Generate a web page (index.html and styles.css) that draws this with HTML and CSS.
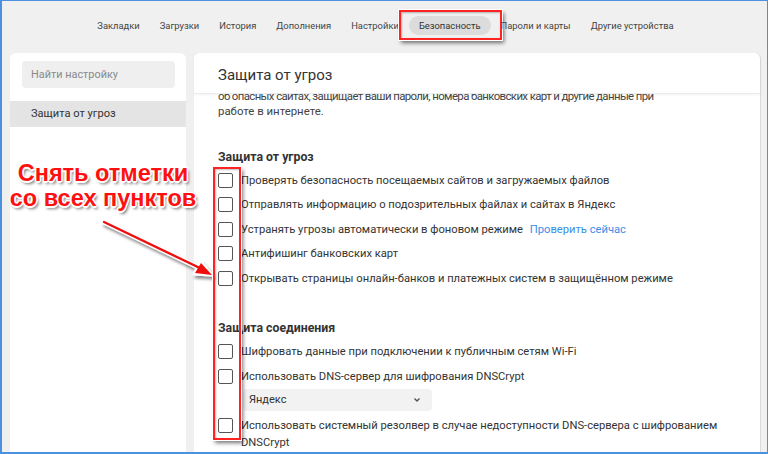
FILE: index.html
```html
<!DOCTYPE html>
<html lang="ru">
<head>
<meta charset="utf-8">
<link rel="stylesheet" href="styles.css">
</head>
<body>
<div class="frame">
  <nav class="topnav">
    <span class="tab">Закладки</span>
    <span class="tab">Загрузки</span>
    <span class="tab">История</span>
    <span class="tab">Дополнения</span>
    <span class="tab">Настройки</span>
    <span class="tab active">Безопасность<span class="mark-box"></span></span>
    <span class="tab">Пароли и карты</span>
    <span class="tab">Другие устройства</span>
  </nav>
  <div class="workspace">
    <aside class="sidebar">
      <div class="search">Найти настройку</div>
      <div class="side-item selected">Защита от угроз</div>
    </aside>
    <main class="panel">
      <header class="panel-head">Защита от угроз</header>
      <div class="panel-body">
        <div class="scroll">
          <p class="intro"><span class="clipped">об опасных сайтах, защищает ваши пароли, номера банковских карт и другие данные при</span><br>работе в интернете.</p>
          <h3 class="group-title first">Защита от угроз</h3>
          <div class="row"><span class="cb"></span><span>Проверять безопасность посещаемых сайтов и загружаемых файлов</span></div>
          <div class="row"><span class="cb"></span><span>Отправлять информацию о подозрительных файлах и сайтах в Яндекс</span></div>
          <div class="row"><span class="cb"></span><span>Устранять угрозы автоматически в фоновом режиме <a class="link">Проверить сейчас</a></span></div>
          <div class="row"><span class="cb"></span><span>Антифишинг банковских карт</span></div>
          <div class="row"><span class="cb"></span><span>Открывать страницы онлайн-банков и платежных систем в защищённом режиме</span></div>
          <h3 class="group-title second">Защита соединения</h3>
          <div class="row"><span class="cb"></span><span>Шифровать данные при подключении к публичным сетям Wi-Fi</span></div>
          <div class="row"><span class="cb"></span><span>Использовать DNS-сервер для шифрования DNSCrypt</span></div>
          <div class="select"><span>Яндекс</span><svg class="chev" width="8" height="6" viewBox="0 0 8 6"><path d="M1.5 1.5 L4 4 L6.5 1.5" fill="none" stroke="#555" stroke-width="1.4"/></svg></div>
          <div class="row wrap"><span class="cb"></span><span class="wrap-text">Использовать системный резолвер в случае недоступности DNS-сервера с шифрованием DNSCrypt</span></div>
        </div>
      </div>
    </main>
  </div>

  <div class="callout">Снять отметки<br>со всех пунктов</div>
  <svg class="arrow" width="130" height="70" viewBox="0 0 130 70">
    <defs>
      <filter id="sh" x="-20%" y="-20%" width="140%" height="160%">
        <feDropShadow dx="2" dy="3" stdDeviation="1.5" flood-color="#000" flood-opacity="0.45"/>
      </filter>
    </defs>
    <g filter="url(#sh)">
      <path d="M4 4 L104 52" stroke="#fff" stroke-width="5" stroke-linecap="round"/>
      <path d="M112 57 L94 56 L101 44 Z" fill="#fff" stroke="#fff" stroke-width="3" stroke-linejoin="round"/>
      <path d="M4 4 L104 52" stroke="#f01010" stroke-width="2.4" stroke-linecap="round"/>
      <path d="M112 57 L95 55 L101 45 Z" fill="#f01010"/>
    </g>
  </svg>
  <div class="cb-mark"></div>
</div>
</body>
</html>
```

FILE: styles.css
```css
* { box-sizing: border-box; }
html, body { margin: 0; padding: 0; }
body {
  width: 768px;
  height: 454px;
  overflow: hidden;
  font-family: Roboto, "Noto Sans", sans-serif;
  color: #333;
}
.frame {
  position: relative;
  width: 768px;
  height: 454px;
  background: #f0f0f0;
  border: 1px solid #4a92e0;
  border-width: 1px 1px 2px 2px;
  display: flex;
  flex-direction: column;
  overflow: hidden;
}
.topnav {
  height: 52px;
  display: flex;
  align-items: center;
  justify-content: center;
  padding-left: 2px;
  padding-bottom: 4px;
  gap: 0;
  font-size: 9.4px;
  color: #444;
}
.tab {
  position: relative;
  padding: 4px 10px;
  border-radius: 10px;
  white-space: nowrap;
}
.tab.active {
  background: #dcdcdc;
  color: #333;
}
.mark-box {
  position: absolute;
  left: -10px;
  right: -11px;
  top: -6px;
  bottom: -5px;
  border: 2px solid #f22;
  outline: 1px solid #fff;
  box-shadow: 2px 3px 4px rgba(0,0,0,0.55), inset 1px 1px 2px rgba(0,0,0,0.25);
}
.workspace {
  flex: 1;
  display: flex;
  gap: 8px;
  padding: 0 6px 0 8px;
  min-height: 0;
}
.sidebar {
  width: 176px;
  background: #fff;
  border-radius: 6px 6px 0 0;
  padding-top: 8px;
}
.search {
  margin: 0 11px 0 12px;
  height: 27px;
  border-radius: 4px;
  background: #efefef;
  color: #8a8a8a;
  font-size: 10.9px;
  line-height: 27px;
  padding-left: 9px;
}
.side-item {
  margin-top: 13px;
  height: 26px;
  line-height: 26px;
  padding-left: 21px;
  font-size: 11.1px;
  color: #333;
}
.side-item.selected { background: #e4e4e4; }
.panel {
  flex: 1;
  background: #fff;
  border-radius: 6px 6px 0 0;
  border-right: 1px solid #dadada;
  display: flex;
  flex-direction: column;
  min-width: 0;
}
.panel-head {
  height: 41px;
  padding: 13px 0 0 24px;
  font-size: 15px;
  color: #333;
  border-bottom: 1px solid #ececec;
  box-shadow: 0 1px 2px rgba(0,0,0,0.06);
  position: relative;
  z-index: 1;
}
.panel-body {
  flex: 1;
  overflow: hidden;
  position: relative;
}
.scroll {
  margin-top: -5px;
  padding-left: 24px;
  font-size: 11.2px;
}
.intro {
  margin: 0;
  line-height: 15px;
  color: #444;
  white-space: nowrap;
  font-size: 11.4px;
}
.intro .clipped { letter-spacing: -0.6px; }
.group-title {
  margin: 0;
  font-size: 12.3px;
  font-weight: 700;
  color: #333;
  line-height: 18px;
}
.group-title.first { margin-top: 29px; margin-bottom: 2px; }
.group-title.second { margin-top: 28px; margin-bottom: 3px; }
.row {
  display: flex;
  align-items: center;
  gap: 8px;
  height: 24.5px;
  color: #333;
  white-space: nowrap;
}
.row.wrap {
  align-items: flex-start;
  white-space: normal;
  height: auto;
  line-height: 17px;
  margin-top: 6.5px;
}
.row.wrap .cb { margin-top: 1px; }
.wrap-text { width: 485px; }
.cb {
  flex: none;
  width: 15px;
  height: 15px;
  border: 1px solid #555;
  border-radius: 2px;
  background: #fff;
}
.link { color: #3a8ee6; margin-left: 4px; }
.select {
  margin: 0 0 0 25px;
  width: 189px;
  height: 22px;
  border-radius: 4px;
  background: #f2f2f2;
  display: flex;
  align-items: center;
  justify-content: space-between;
  padding: 0 11px 0 6px;
  font-size: 11px;
  color: #333;
}
.callout {
  position: absolute;
  left: 4px;
  top: 160px;
  width: 194px;
  text-align: center;
  font-family: "Liberation Sans", Arial, sans-serif;
  font-weight: 700;
  font-size: 23.5px;
  line-height: 25px;
  color: #ff1010;
  text-shadow:
    -1px -1px 0 #fff, 1px -1px 0 #fff, -1px 1px 0 #fff, 1px 1px 0 #fff,
    0 -1.5px 0 #fff, 0 1.5px 0 #fff, -1.5px 0 0 #fff, 1.5px 0 0 #fff,
    2px 3px 3px rgba(0,0,0,0.55);
}
.arrow {
  position: absolute;
  left: 98px;
  top: 217px;
  overflow: visible;
}
.cb-mark {
  position: absolute;
  left: 211px;
  top: 166px;
  width: 28px;
  height: 273px;
  border: 2px solid #f22;
  outline: 1px solid #fff;
  box-shadow: 2px 3px 4px rgba(0,0,0,0.55), inset 1px 1px 2px rgba(0,0,0,0.25);
}
```
